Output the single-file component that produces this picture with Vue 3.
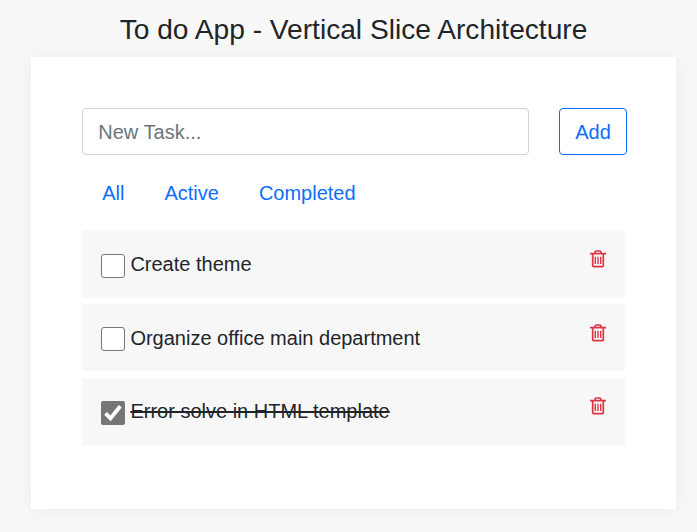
<script setup>
import { ref } from 'vue'

const draft = ref('')
const filters = ['All', 'Active', 'Completed']
const tasks = ref([
  { id: 1, title: 'Create theme', done: false },
  { id: 2, title: 'Organize office main department', done: false },
  { id: 3, title: 'Error solve in HTML template', done: true },
])
</script>

<template>
  <main class="page">
    <h1 class="title">To do App - Vertical Slice Architecture</h1>
    <section class="card">
      <form class="entry" @submit.prevent>
        <input v-model="draft" class="field" type="text" placeholder="New Task..." />
        <button class="add" type="submit">Add</button>
      </form>
      <nav class="filters">
        <a v-for="f in filters" :key="f" class="filter">{{ f }}</a>
      </nav>
      <ul class="list">
        <li v-for="t in tasks" :key="t.id" class="task">
          <label class="label">
            <input v-model="t.done" class="native" type="checkbox" />
            <span class="box" :class="{ checked: t.done }">
              <svg v-if="t.done" viewBox="0 0 24 24"><path d="M4.6 12.3l4.9 5L19.3 5.2" /></svg>
            </span>
            <span class="text" :class="{ done: t.done }">{{ t.title }}</span>
          </label>
          <svg class="trash" viewBox="0 0 18 19">
            <path class="outline" d="M1 4.6h16M6 4.4V3.5Q6 2 7.5 2h3Q12 2 12 3.5v.9M3.7 4.6v12q0 1 1 1h8.6q1 0 1-1v-12" />
            <path class="bars" d="M6.3 7.7v7.3M9 7.7v7.3M11.7 7.7v7.3" />
          </svg>
        </li>
      </ul>
    </section>
  </main>
</template>

<style>
body {
  margin: 0;
  background: #f8f8f8;
}
</style>

<style scoped>
.page {
  box-sizing: border-box;
  height: 532px;
  padding: 12px 21px 0 31px;
  overflow: hidden;
  font-family: "Liberation Sans", Arial, sans-serif;
  font-size: 20px;
  color: #212529;
}
.title {
  margin: 0;
  height: 45px;
  line-height: 36px;
  font-size: 28.15px;
  font-weight: 400;
  text-align: center;
  white-space: nowrap;
}
.card {
  box-sizing: border-box;
  height: 452px;
  padding: 51px 49px 0 51px;
  border-radius: 1px;
  background: #fff;
  box-shadow: 0 1px 20px rgba(69, 90, 100, 0.08);
}
.entry {
  display: flex;
  gap: 30px;
}
.field {
  box-sizing: border-box;
  width: 447px;
  height: 47px;
  padding: 2px 15px 0 15.3px;
  border: 1px solid #ced4da;
  border-radius: 4px;
  font: inherit;
  outline: none;
}
.field::placeholder {
  color: #6c757d;
  opacity: 1;
}
.add {
  box-sizing: border-box;
  width: 68px;
  height: 47px;
  padding: 2px 0 0;
  border: 1px solid #0d6efd;
  border-radius: 4px;
  background: #fff;
  color: #0d6efd;
  font: inherit;
}
.filters {
  display: flex;
  gap: 40px;
  height: 75.4px;
  padding-left: 20.2px;
  line-height: 76px;
  color: #0d6efd;
}
.list {
  display: grid;
  gap: 6.5px;
  width: 543px;
  margin: 0;
  padding: 0;
  list-style: none;
}
.task {
  box-sizing: border-box;
  display: flex;
  justify-content: space-between;
  height: 67.2px;
  padding: 18.6px 18px 0 19px;
  background: #f7f7f7;
}
.label {
  display: flex;
  gap: 5.4px;
  height: 30px;
}
.native {
  display: none;
}
.box {
  box-sizing: border-box;
  width: 24px;
  height: 24px;
  margin-top: 4.8px;
  border: 1.5px solid #767676;
  border-radius: 3px;
  background: #fff;
}
.box.checked {
  border: 0;
  border-radius: 2px;
  background: #767676;
}
.box svg {
  display: block;
  fill: none;
  stroke: #fff;
  stroke-width: 3.8;
}
.text {
  line-height: 30px;
}
.done {
  text-decoration: line-through;
}
.trash {
  width: 18px;
  height: 19px;
  fill: none;
  stroke: #dc3545;
}
.outline {
  stroke-width: 1.7;
}
.bars {
  stroke-width: 1.4;
}
</style>
